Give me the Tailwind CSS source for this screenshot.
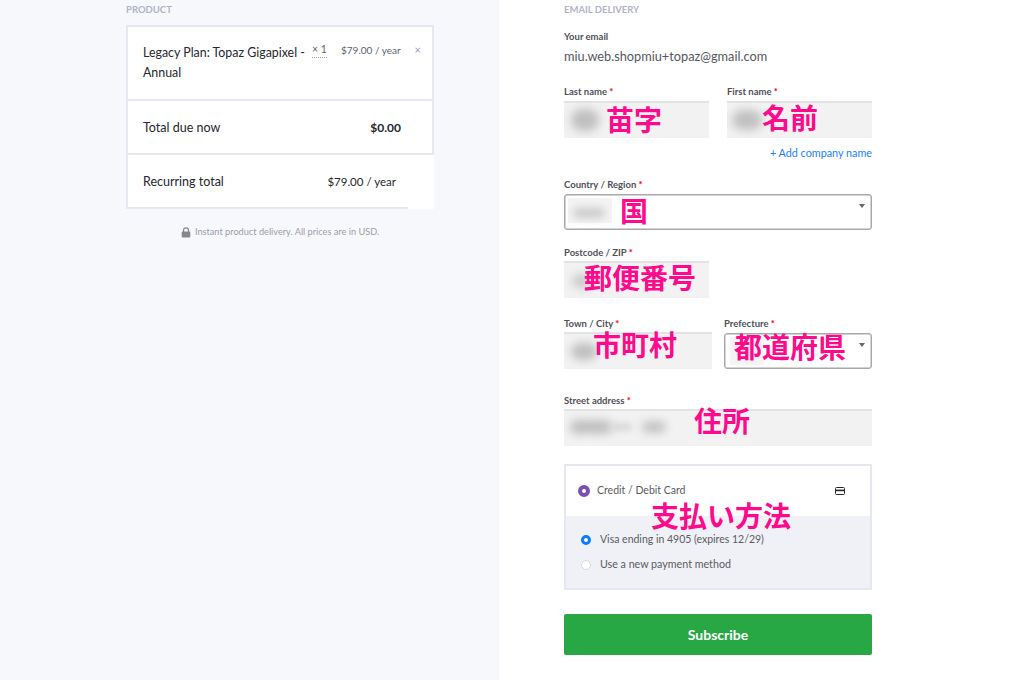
<!DOCTYPE html>
<html lang="en">
  <head>
    <meta charset="UTF-8" />
    <meta name="viewport" content="width=device-width, initial-scale=1.0" />
    <title>Checkout</title>
    <script src="https://cdn.jsdelivr.net/npm/@tailwindcss/browser@4"></script>
  </head>
  <body class="bg-white font-['Lato','Noto_Sans_CJK_JP',sans-serif] overflow-hidden">
    <div class="flex w-[1020px] h-[680px] overflow-hidden">
      <!-- Left column -->
      <div class="w-[499px] h-full bg-[#f7f8fb] pl-[126px] pr-[65px] pt-[4px]">
        <h2 class="h-[21px] text-[9.5px] leading-[11px] font-bold text-[#b1b3c9] uppercase">Product</h2>
        <div class="relative bg-white border-2 border-[#e6e7f1] text-[#26262e]">
          <div class="flex h-[74px] pl-[15px] pr-[13px] pt-[16px] border-b-2 border-[#e6e7f1]">
            <p class="w-[167px] text-[12.4px] leading-[20px]">Legacy Plan: Topaz Gigapixel -<br />Annual</p>
            <span class="w-[15px] ml-[2px] h-[15px] text-[10.5px] leading-[12px] text-[#5d5f70] border-b border-dotted border-[#9a9cab] self-start text-center whitespace-nowrap">× 1</span>
            <span class="ml-[14px] text-[10px] leading-[14px] text-[#5d5f70] whitespace-nowrap">$79.00 / year</span>
            <span class="absolute right-[11px] top-[16px] text-[11px] leading-[14px] text-[#9a9cb0]">×</span>
          </div>
          <div class="flex justify-between items-center h-[54px] pl-[15px] pr-[31px] pt-[2px] border-b-2 border-[#e6e7f1] text-[12.5px]">
            <span>Total due now</span>
            <span class="font-bold text-[12px]">$0.00</span>
          </div>
          <div class="flex justify-between items-center h-[52px] pl-[15px] pr-[36px] pt-[2px] text-[12.5px]">
            <span>Recurring total</span>
            <span class="text-[11.5px]">$79.00 / year</span>
          </div>
          <!-- white patch covering the card's corner -->
          <div class="absolute right-[-2px] bottom-[-2px] w-[26px] h-[54px] bg-white"></div>
        </div>
        <p class="mt-[16px] flex justify-center items-center gap-[4px] text-[9.2px] leading-[14px] text-[#9c9ea8]">
          <svg class="w-[10px] h-[11px]" viewBox="0 0 10 11" fill="none">
            <path d="M2.5 5V3.3a2.5 2.5 0 0 1 5 0V5" stroke="#85868f" stroke-width="1.2"></path>
            <rect x="0.7" y="4.6" width="8.6" height="6" rx="1" fill="#85868f"></rect>
          </svg>
          Instant product delivery. All prices are in USD.
        </p>
      </div>

      <!-- Right column -->
      <div class="relative w-[521px] h-full pl-[65px] pt-[4px]">
        <div class="w-[308px]">
          <h2 class="h-[27px] text-[9.5px] leading-[11px] font-bold text-[#b1b3c9] uppercase">Email delivery</h2>
          <p class="text-[9.5px] leading-[11px] font-bold text-[#4f5058]">Your email</p>
          <p class="mt-[6px] text-[12.75px] leading-[17px] text-[#55565e]">miu.web.shopmiu+topaz@gmail.com</p>

          <div class="mt-[21px] flex gap-[18px]">
            <div class="w-[145px]">
              <p class="h-[15px] text-[9.5px] leading-[11px] font-bold text-[#4f5058]">Last name <span class="text-red-600">*</span></p>
              <div class="relative h-[37px] bg-[#f2f2f2] border-t-2 border-[#e3e3e3] overflow-hidden">
                <div class="absolute left-[7px] top-[6px] w-[28px] h-[22px] rounded-full bg-[#bfbfbf] blur-[5px]"></div>
              </div>
            </div>
            <div class="w-[145px]">
              <p class="h-[15px] text-[9.5px] leading-[11px] font-bold text-[#4f5058]">First name <span class="text-red-600">*</span></p>
              <div class="relative h-[37px] bg-[#f2f2f2] border-t-2 border-[#e3e3e3] overflow-hidden">
                <div class="absolute left-[5px] top-[7px] w-[30px] h-[20px] rounded-full bg-[#c0c0c0] blur-[5px]"></div>
              </div>
            </div>
          </div>
          <p class="mt-[8px] text-right text-[10.8px] leading-[14px] text-[#1a80f5]">+ Add company name</p>

          <p class="mt-[19px] h-[15px] text-[9.5px] leading-[11px] font-bold text-[#4f5058]">Country / Region <span class="text-red-600">*</span></p>
          <div class="relative h-[36px] rounded-[3px] border border-[#a8a8a8] shadow-[inset_0_0_0_0.5px_#a8a8a8] overflow-hidden">
            <div class="absolute left-[3px] top-[3px] w-[44px] h-[25px] bg-[#f4f4f4]"></div>
            <div class="absolute left-[8px] top-[13px] w-[32px] h-[10px] rounded-full bg-[#c8c8c8] blur-[4px]"></div>
            <div class="absolute right-[6px] top-[9px] w-0 h-0 border-x-[3.5px] border-x-transparent border-t-[4px] border-t-[#666]"></div>
          </div>

          <p class="mt-[17px] h-[14px] text-[9.5px] leading-[11px] font-bold text-[#4f5058]">Postcode / ZIP <span class="text-red-600">*</span></p>
          <div class="relative w-[145px] h-[37px] bg-[#f2f2f2] border-t-2 border-[#e3e3e3] overflow-hidden">
            <div class="absolute left-[8px] top-[11px] w-[20px] h-[14px] rounded-full bg-[#cccccc] blur-[4px]"></div>
          </div>

          <div class="mt-[20px] flex gap-[12px]">
            <div class="w-[148px]">
              <p class="h-[14px] text-[9.5px] leading-[11px] font-bold text-[#4f5058]">Town / City <span class="text-red-600">*</span></p>
              <div class="relative h-[37px] bg-[#f2f2f2] border-t-2 border-[#e3e3e3] overflow-hidden">
                <div class="absolute left-[7px] top-[9px] w-[26px] h-[17px] rounded-full bg-[#c0c0c0] blur-[4px]"></div>
              </div>
            </div>
            <div class="w-[148px]">
              <p class="h-[15px] text-[9.5px] leading-[11px] font-bold text-[#4f5058]">Prefecture <span class="text-red-600">*</span></p>
              <div class="relative h-[36px] rounded-[3px] border border-[#a8a8a8] shadow-[inset_0_0_0_0.5px_#a8a8a8] overflow-hidden">
                <div class="absolute left-[5px] top-[3px] w-[34px] h-[28px] bg-[#f4f4f4]"></div>
                <div class="absolute right-[6px] top-[9px] w-0 h-0 border-x-[3.5px] border-x-transparent border-t-[4px] border-t-[#666]"></div>
              </div>
            </div>
          </div>

          <p class="mt-[26px] h-[14px] text-[9.5px] leading-[11px] font-bold text-[#4f5058]">Street address <span class="text-red-600">*</span></p>
          <div class="relative h-[37px] bg-[#f2f2f2] border-t-2 border-[#e3e3e3] overflow-hidden">
            <div class="absolute left-[6px] top-[9px] w-[42px] h-[14px] rounded-full bg-[#c0c0c0] blur-[4px]"></div>
            <div class="absolute left-[46px] top-[12px] w-[22px] h-[8px] rounded-full bg-[#d8d8d8] blur-[3px]"></div>
            <div class="absolute left-[78px] top-[10px] w-[24px] h-[12px] rounded-full bg-[#c4c4c4] blur-[4px]"></div>
          </div>

          <!-- Payment -->
          <div class="mt-[18px] h-[126px] border-2 border-[#e6e7f1] bg-[#f0f1f6]">
            <div class="flex items-center h-[50px] bg-white pl-[12px] pr-[25px]">
              <span class="w-[12px] h-[12px] rounded-full border-[4px] border-[#7b4fb0] bg-white"></span>
              <span class="ml-[7px] text-[10.5px] text-[#5a5b63]">Credit / Debit Card</span>
              <svg class="ml-auto w-[10px] h-[8px]" viewBox="0 0 10 8" fill="none">
                <rect x="0.5" y="0.5" width="9" height="7" rx="1" stroke="#26262e"></rect>
                <rect x="0.5" y="2.6" width="9" height="1.6" fill="#26262e"></rect>
              </svg>
            </div>
            <div class="flex items-center h-[25px] mt-[11px] pl-[15px]">
              <span class="w-[10px] h-[10px] rounded-full border-[3px] border-[#0a7cff] bg-white"></span>
              <span class="ml-[9px] text-[10.5px] text-[#5a5b63]">Visa ending in 4905 (expires 12/29)</span>
            </div>
            <div class="flex items-center h-[25px] pl-[15px]">
              <span class="w-[10px] h-[10px] rounded-full border border-[#d8d9df] bg-white"></span>
              <span class="ml-[9px] text-[10.7px] text-[#5a5b63]">Use a new payment method</span>
            </div>
          </div>

          <button class="mt-[24px] w-full h-[41px] rounded-[2px] bg-[#28a745] text-white text-[14px] font-bold">Subscribe</button>
        </div>

        <!-- Pink annotations pasted over the screenshot -->
        <span class="absolute left-[107px] top-[105px] text-[28px] leading-[30px] font-bold text-[#ff0a8c]">苗字</span>
        <span class="absolute left-[263px] top-[103px] text-[28px] leading-[30px] font-bold text-[#ff0a8c]">名前</span>
        <span class="absolute left-[121px] top-[196px] text-[28px] leading-[30px] font-bold text-[#ff0a8c]">国</span>
        <span class="absolute left-[85px] top-[263px] text-[28px] leading-[30px] font-bold text-[#ff0a8c]">郵便番号</span>
        <span class="absolute left-[94px] top-[330px] text-[28px] leading-[30px] font-bold text-[#ff0a8c]">市町村</span>
        <span class="absolute left-[235px] top-[332px] text-[28px] leading-[30px] font-bold text-[#ff0a8c]">都道府県</span>
        <span class="absolute left-[195px] top-[406px] text-[28px] leading-[30px] font-bold text-[#ff0a8c]">住所</span>
        <span class="absolute left-[152px] top-[501px] text-[28px] leading-[30px] font-bold text-[#ff0a8c] whitespace-nowrap">支払い方法</span>
      </div>
    </div>
  </body>
</html>
